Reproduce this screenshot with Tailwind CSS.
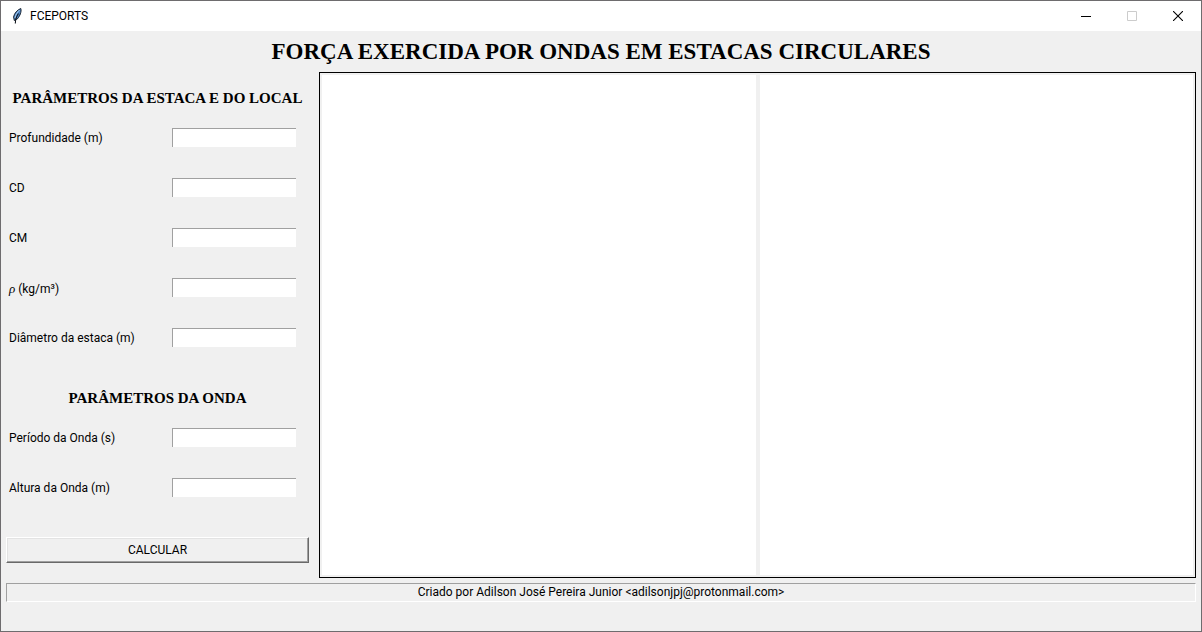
<!DOCTYPE html>
<html lang="pt-BR">
<head>
<meta charset="utf-8">
<meta name="viewport" content="width=device-width, initial-scale=1">
<title>FCEPORTS</title>
<script src="https://cdn.jsdelivr.net/npm/@tailwindcss/browser@4"></script>
</head>
<body class="flex min-h-screen flex-col border border-[#6e6c6e] bg-[#f0f0f0] font-['Segoe_UI','Roboto',sans-serif] text-[12px] leading-4 text-black">
  <header class="flex h-[30px] items-center bg-white">
    <svg class="ml-2 size-4" viewBox="0 0 16 16" aria-hidden="true">
      <path d="M11.8 0.5C8.5 1.8 5.2 5.200 4.600 9L5.300 12.500L8.800 10.500C10.600 8 12.800 4 11.800 0.500Z" fill="#4f87c6" stroke="#17202c" stroke-width="1"/>
      <path d="M10.600 2C8 4.500 6.600 7 6 10" fill="none" stroke="#a9cdf0" stroke-width="1"/>
      <path d="M9.500 5.500C7.500 8 6.500 10.500 6.300 15.500" fill="none" stroke="#0c1118" stroke-width="1.100"/>
    </svg>
    <span class="ml-[5px] flex-1">FCEPORTS</span>
    <button type="button" aria-label="Minimizar" class="flex h-full w-[46px] items-center justify-center">
      <svg class="size-[10px]" viewBox="0 0 10 10" shape-rendering="crispEdges"><path d="M0 5h10v1H0z"/></svg>
    </button>
    <button type="button" disabled aria-label="Maximizar" class="flex h-full w-[46px] items-center justify-center">
      <svg class="size-[10px]" viewBox="0 0 10 10"><path d="M.5.5h9v9h-9z" fill="none" stroke="#ccc"/></svg>
    </button>
    <button type="button" aria-label="Fechar" class="flex h-full w-[46px] items-center justify-center">
      <svg class="size-[10px]" viewBox="0 0 10 10"><path d="M0 0l10 10M10 0L0 10" stroke="#000" stroke-width="1.100"/></svg>
    </button>
  </header>

  <h1 class="py-2 text-center font-['Liberation_Serif',serif] text-[23px] leading-[25px] font-bold">FORÇA EXERCIDA POR ONDAS EM ESTACAS CIRCULARES</h1>

  <main class="flex gap-[10px] px-[5px]">
    <form class="flex w-[303px] shrink-0 flex-col">
      <h2 class="pt-4 pb-[5px] text-center font-['Liberation_Serif',serif] text-[15px] leading-5 font-bold whitespace-nowrap">PARÂMETROS DA ESTACA E DO LOCAL</h2>
      <div class="flex h-[50px] items-start pt-[15px] pl-[3px]">
        <label for="prof" class="w-[163px] leading-[21px]">Profundidade (m)</label>
        <input id="prof" type="text" class="h-[19px] w-[124px] border-t border-l border-[#a0a0a0] bg-white px-1 outline-none">
      </div>
      <div class="flex h-[50px] items-start pt-[15px] pl-[3px]">
        <label for="cd" class="w-[163px] leading-[21px]">CD</label>
        <input id="cd" type="text" class="h-[19px] w-[124px] border-t border-l border-[#a0a0a0] bg-white px-1 outline-none">
      </div>
      <div class="flex h-[50px] items-start pt-[15px] pl-[3px]">
        <label for="cm" class="w-[163px] leading-[21px]">CM</label>
        <input id="cm" type="text" class="h-[19px] w-[124px] border-t border-l border-[#a0a0a0] bg-white px-1 outline-none">
      </div>
      <div class="flex h-[50px] items-start pt-[15px] pl-[3px]">
        <label for="rho" class="w-[163px] leading-[21px]"><i class="font-['Liberation_Serif',serif] text-[13px]">ρ</i> (kg/m³)</label>
        <input id="rho" type="text" class="h-[19px] w-[124px] border-t border-l border-[#a0a0a0] bg-white px-1 outline-none">
      </div>
      <div class="flex h-[50px] items-start pt-[15px] pl-[3px]">
        <label for="diam" class="w-[163px] leading-[21px]">Diâmetro da estaca (m)</label>
        <input id="diam" type="text" class="h-[19px] w-[124px] border-t border-l border-[#a0a0a0] bg-white px-1 outline-none">
      </div>
      <h2 class="pt-[25px] pb-[5px] text-center font-['Liberation_Serif',serif] text-[15px] leading-5 font-bold">PARÂMETROS DA ONDA</h2>
      <div class="flex h-[50px] items-start pt-[15px] pl-[3px]">
        <label for="per" class="w-[163px] leading-[21px]">Período da Onda (s)</label>
        <input id="per" type="text" class="h-[19px] w-[124px] border-t border-l border-[#a0a0a0] bg-white px-1 outline-none">
      </div>
      <div class="flex h-[50px] items-start pt-[15px] pl-[3px]">
        <label for="alt" class="w-[163px] leading-[21px]">Altura da Onda (m)</label>
        <input id="alt" type="text" class="h-[19px] w-[124px] border-t border-l border-[#a0a0a0] bg-white px-1 outline-none">
      </div>
      <button type="button" class="mt-6 mb-[15px] h-[26px] border border-t-white border-r-[#696969] border-b-[#696969] border-l-white shadow-[inset_-1px_-1px_#a0a0a0,inset_1px_1px_#e3e3e3]">CALCULAR</button>
    </form>
    <section aria-label="Gráficos" class="flex flex-1 gap-1 border border-black p-[2px]">
      <div class="flex-1 bg-white"></div>
      <div class="flex-1 bg-white"></div>
    </section>
  </main>

  <footer class="mx-[5px] mt-[5px] border border-t-[#a0a0a0] border-r-white border-b-white border-l-[#a0a0a0] text-center leading-[17px]">Criado por Adilson José Pereira Junior &lt;adilsonjpj@protonmail.com&gt;</footer>
</body>
</html>
